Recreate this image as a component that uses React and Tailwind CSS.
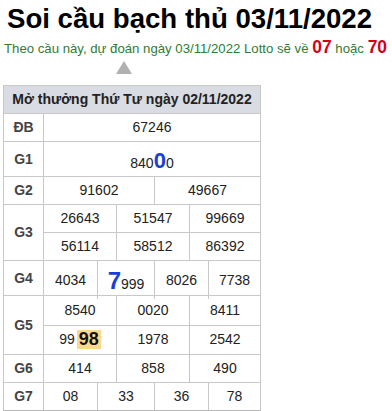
import React from 'react';

const cell = 'flex items-center justify-center border-r border-[#c8c8c8] last:border-r-0';

const Row = ({ label, h, children, last }) => (
  <div className={`flex ${last ? '' : 'border-b border-[#c8c8c8]'}`} style={{ height: h }}>
    <div className="w-[40px] shrink-0 flex items-center justify-center border-r border-[#c8c8c8] font-bold text-[14px] text-[#444]">
      {label}
    </div>
    <div className="flex-1 flex flex-col">{children}</div>
  </div>
);

const Line = ({ widths, values, h, bottom }) => (
  <div className={`flex flex-1 ${bottom ? 'border-b border-[#c8c8c8]' : ''}`} style={h ? { height: h } : undefined}>
    {values.map((v, i) => (
      <div
        key={i}
        className={`${cell} ${widths[i] ? 'shrink-0' : 'flex-1'}`}
        style={widths[i] ? { width: widths[i] } : undefined}
      >
        {v}
      </div>
    ))}
  </div>
);

const three = [73, 73, null];
const four = [54, 57, 54, null];

export default function App() {
  return (
    <div className="w-[392px] h-[411px] bg-white overflow-hidden font-['Liberation_Sans',Arial,sans-serif] text-[#222]">
      <h1 className="pl-[7px] pt-[3px] text-[27.6px] leading-[32px] font-bold text-black whitespace-nowrap">
        Soi cầu bạch thủ 03/11/2022
      </h1>
      <p className="pl-[4px] mt-[3px] text-[13.2px] leading-[18px] text-[#2e7d32] whitespace-nowrap">
        Theo cầu này, dự đoán ngày 03/11/2022 Lotto sẽ về{' '}
        <b className="text-[17.5px] text-[#d0021b]">07</b> hoặc{' '}
        <b className="text-[17.5px] text-[#d0021b]">70</b>
      </p>
      <div className="pl-[116px] mt-[3px] h-[13px]">
        <div className="w-0 h-0 border-l-[8px] border-r-[8px] border-b-[13px] border-l-transparent border-r-transparent border-b-[#b0b0b0]" />
      </div>
      <div className="ml-[3px] mt-[11px] w-[258px] border border-[#c8c8c8] border-b-2 border-b-[#b8b8b8] text-[14px]">
        <div className="h-[28px] flex items-center justify-center bg-[#d9dce3] border-b border-[#c8c8c8] font-bold text-[14px] text-[#222]">
          Mở thưởng Thứ Tư ngày 02/11/2022
        </div>
        <Row label="ĐB" h={28}>
          <Line widths={[null]} values={['67246']} />
        </Row>
        <Row label="G1" h={35}>
          <Line
            widths={[null]}
            values={[
              <span key="g1" className="pt-[2px]">
                840<b className="text-[22px] text-[#1a3fd6]">0</b>0
              </span>,
            ]}
          />
        </Row>
        <Row label="G2" h={28}>
          <Line widths={[111, null]} values={['91602', '49667']} />
        </Row>
        <Row label="G3" h={56}>
          <Line widths={three} values={['26643', '51547', '99669']} bottom />
          <Line widths={three} values={['56114', '58512', '86392']} />
        </Row>
        <Row label="G4" h={35}>
          <Line
            widths={four}
            values={[
              '4034',
              <span key="g4" className="pt-[2px]">
                <b className="text-[24px] text-[#1a3fd6]">7</b>999
              </span>,
              '8026',
              '7738',
            ]}
          />
        </Row>
        <Row label="G5" h={59}>
          <Line widths={three} values={['8540', '0020', '8411']} bottom />
          <Line
            widths={three}
            values={[
              <span key="g5" className="flex items-center">
                99
                <b className="ml-[2px] px-[2px] bg-[#fbd98c] text-[18px] leading-[19px] text-[#111]">98</b>
              </span>,
              '1978',
              '2542',
            ]}
          />
        </Row>
        <Row label="G6" h={28}>
          <Line widths={three} values={['414', '858', '490']} />
        </Row>
        <Row label="G7" h={27} last>
          <Line widths={four} values={['08', '33', '36', '78']} />
        </Row>
      </div>
    </div>
  );
}
